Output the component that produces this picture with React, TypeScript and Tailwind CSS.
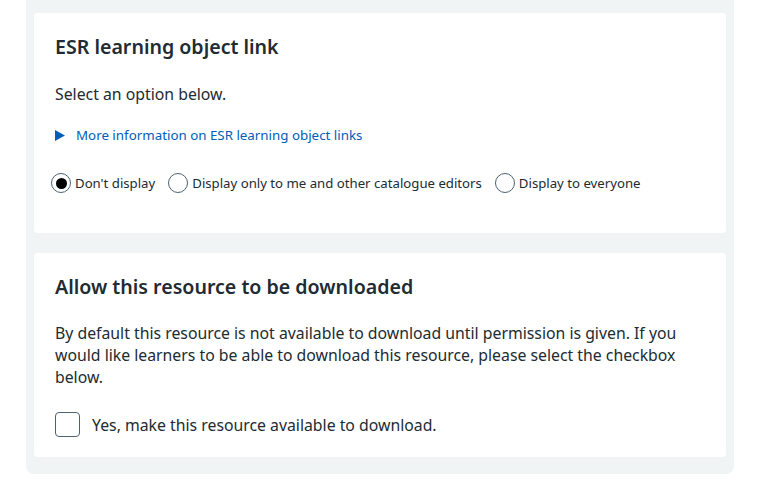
import React from "react";

const font = { fontFamily: '"Noto Sans", "Open Sans", Arial, sans-serif' };

function Radio({ checked, label }: { checked?: boolean; label: string }) {
  return (
    <label className="flex items-center">
      <span className="flex h-[20px] w-[20px] items-center justify-center rounded-full border border-[#4c6272] bg-white">
        {checked && <span className="h-[11px] w-[11px] rounded-full bg-black" />}
      </span>
      <span className="ml-[4px] text-[13.2px] leading-[20px] text-[#212b32]">{label}</span>
    </label>
  );
}

export default function App() {
  return (
    <div className="h-[480px] w-[765px] bg-white pl-[26px] pr-[31px]" style={font}>
      <div className="flex flex-col gap-[20px] rounded-b-lg bg-[#f0f4f5] px-[8px] pb-[17px] pt-[13px]">
        <section className="rounded bg-white px-[21px] pb-[40px] pt-[20px] text-[#212b32]">
          <h3 className="text-[19.6px] font-semibold leading-[28px]">ESR learning object link</h3>
          <p className="mt-[22px] text-[15.8px] leading-[22px]">Select an option below.</p>
          <div className="mt-[20px] flex items-center text-[13.33px] leading-[20px] text-[#005eb8]">
            <svg width="10" height="11" viewBox="0 0 10 11" className="mr-[11px]">
              <path d="M0 0 L10 5.5 L0 11 Z" fill="#005eb8" />
            </svg>
            <span>More information on ESR learning object links</span>
          </div>
          <div className="-ml-[4px] mt-[28px] flex items-center gap-[13px]">
            <Radio checked label="Don't display" />
            <Radio label="Display only to me and other catalogue editors" />
            <Radio label="Display to everyone" />
          </div>
        </section>
        <section className="rounded bg-white px-[21px] pb-[20px] pt-[20px] text-[#212b32]">
          <h3 className="text-[19.6px] font-semibold leading-[28px]">Allow this resource to be downloaded</h3>
          <p className="mt-[21px] text-[15.8px] leading-[22px]">
            By default this resource is not available to download until permission is given. If you
            would like learners to be able to download this resource, please select the checkbox
            below.
          </p>
          <label className="mt-[24px] flex items-center">
            <span className="h-[25px] w-[25px] rounded-[4px] border border-[#4c6272] bg-white" />
            <span className="ml-[12px] text-[15.8px] leading-[22px]">Yes, make this resource available to download.</span>
          </label>
        </section>
      </div>
    </div>
  );
}
